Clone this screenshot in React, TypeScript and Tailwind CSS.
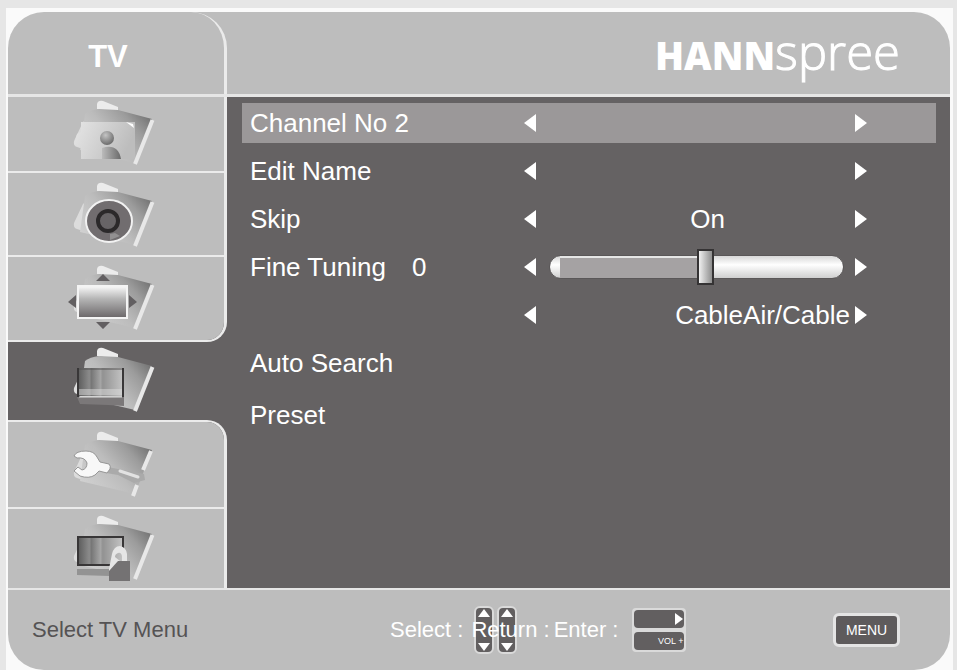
import { useState } from "react";
import type { ReactNode } from "react";

function Folder({ children, broken = false }: { children: ReactNode; broken?: boolean }) {
  return (
    <svg viewBox="0 0 92 68" className="h-[68px] w-[92px]" aria-hidden="true">
      <defs>
        <linearGradient id="folder" x1="0" y1="0.8" x2="1" y2="0.15">
          <stop offset="0" stopColor="#d2d2d2" />
          <stop offset="0.45" stopColor="#bcbcbc" />
          <stop offset="0.75" stopColor="#9c9c9c" />
          <stop offset="1" stopColor="#707070" />
        </linearGradient>
        <linearGradient id="photo" x1="0" y1="0" x2="1" y2="0.3">
          <stop offset="0" stopColor="#e6e6e6" />
          <stop offset="0.5" stopColor="#d2d2d2" />
          <stop offset="1" stopColor="#bdbdbd" />
        </linearGradient>
        <radialGradient id="ball" cx="0.4" cy="0.3" r="0.7">
          <stop offset="0" stopColor="#c4c4c4" />
          <stop offset="1" stopColor="#6c6c6c" />
        </radialGradient>
        <linearGradient id="body" x1="0" y1="0" x2="1" y2="0">
          <stop offset="0" stopColor="#bbbbbb" />
          <stop offset="1" stopColor="#6a6a6a" />
        </linearGradient>
        <linearGradient id="screen" x1="0" y1="0" x2="0" y2="1">
          <stop offset="0" stopColor="#fafafa" />
          <stop offset="0.4" stopColor="#b5b5b5" />
          <stop offset="1" stopColor="#6a6668" />
        </linearGradient>
        <linearGradient id="bars" x1="0" y1="0" x2="1" y2="0">
          <stop offset="0" stopColor="#5b5b5b" />
          <stop offset="0.25" stopColor="#8b8b8b" />
          <stop offset="0.3" stopColor="#777777" />
          <stop offset="0.5" stopColor="#a5a5a5" />
          <stop offset="0.55" stopColor="#929292" />
          <stop offset="1" stopColor="#c4c4c4" />
        </linearGradient>
      </defs>
      <path d="M29 4Q30 0 35 1L50 7V12L29 9Z" fill="#ececec" />
      <path d="M15 22L6 41Q5 46 9 47L18 50L20 18Z" fill="#dcdcdc" />
      <path d="M17 14Q22 10 31 9L50 10L84 19L67 63L12 50Z" fill="url(#folder)" />
      {broken ? (
        <path d="M83 20L75 39M69 54L65 65" stroke="#e8e8e8" strokeWidth="4" />
      ) : (
        <path d="M84.500 20L67 64" stroke="#e8e8e8" strokeWidth="4" />
      )}
      {children}
    </svg>
  );
}

function PictureIcon() {
  return (
    <Folder>
      <path d="M13 22H67V59H13V48L6 44L9 34L13 32Z" fill="url(#photo)" />
      <path d="M58 22L65 24L66 28Z" fill="#ffffff" />
      <path d="M34 59V48Q50 43 53 59Z" fill="url(#body)" />
      <circle cx="39" cy="38" r="7" fill="url(#ball)" />
    </Folder>
  );
}

function SoundIcon() {
  return (
    <Folder>
      <ellipse cx="41" cy="39" rx="23" ry="21" fill="#716d6f" stroke="#f2f2f2" strokeWidth="2" />
      <circle cx="40" cy="39" r="10" fill="#676466" stroke="#2b292a" strokeWidth="4" />
      <path d="M42 52L47 51L52 54L42 58Z" fill="#929091" />
    </Folder>
  );
}

function WindowIcon() {
  return (
    <Folder>
      <path d="M35 9L42 16H28ZM0 37L8 30V43ZM69 37L61 30V43ZM35 64L42 57H28Z" fill="#625f61" />
      <rect x="10" y="21" width="49" height="32" fill="url(#screen)" stroke="#f4f4f4" strokeWidth="2" />
    </Folder>
  );
}

function TvIcon() {
  return (
    <Folder>
      <path d="M9 50H56V59L40 58L12 57Z" fill="#7b7879" />
      <rect x="10" y="21" width="45" height="28" fill="url(#bars)" />
      <path d="M11 42H54V48H11Z" fill="#dcdcdc" opacity="0.5" />
      <path d="M9 22H56" stroke="#555253" />
      <path d="M10 21V50M55 21V50" stroke="#393738" strokeWidth="2" />
      <path d="M11 50H54" stroke="#dddddd" />
    </Folder>
  );
}

function SetupIcon() {
  return (
    <Folder broken>
      <path d="M40 36L55 39L76 43L77 49L66 52L50 44L38 42Z" fill="#aaaaaa" />
      <path d="M52 40L70 46" stroke="#e2e2e2" strokeWidth="3" strokeLinecap="round" />
      <path
        d="M6 25Q8 20 18 20Q26 20 29 26L32 31L41 33Q43 35 42 38L39 42L31 40L27 44Q21 48 12 45L6 40L10 36L14 39Q19 38 19 32Q17 26 9 27Z"
        fill="#f8f8f8"
        stroke="#969696"
        strokeWidth="1"
      />
    </Folder>
  );
}

function LockIcon() {
  return (
    <Folder>
      <path d="M9 54H42V61L9 60Z" fill="#939393" />
      <rect x="10" y="22" width="45" height="28" fill="url(#bars)" stroke="#383637" strokeWidth="2" />
      <path d="M41 54L44 39Q46 31 52 31Q58 32 59 39V47H54V41Q53 37 50 38Q47 39 47 42L52 46L41 58Z" fill="#e6e6e6" />
      <path d="M41 56L50 46H62V66H41Z" fill="#747273" />
    </Folder>
  );
}

function Arrow({ left = false, label }: { left?: boolean; label: string }) {
  return (
    <button type="button" aria-label={label} className="h-5 w-[13px] shrink-0">
      <svg viewBox="0 0 13 20" className="h-5 w-[13px]" aria-hidden="true">
        <path d={left ? "M0 10L12 1V19Z" : "M13 10L1 1V19Z"} fill="#ffffff" />
      </svg>
    </button>
  );
}

interface RowProps {
  label: string;
  value?: number;
  active?: boolean;
  children?: ReactNode;
}

function Row({ label, value, active = false, children }: RowProps) {
  return (
    <div
      role="group"
      aria-label={label || "Signal source"}
      className={`flex h-10 items-center pr-[69px] pl-2 ${active ? "bg-[#9b9899]" : ""}`}
    >
      <span className="flex w-[274px] shrink-0 gap-[26px]">
        <span>{label}</span>
        {value !== undefined && <span>{value}</span>}
      </span>
      <Arrow left label="Previous" />
      <div className="flex min-w-0 flex-1 items-center">{children}</div>
      <Arrow label="Next" />
    </div>
  );
}

const MIN = -50;
const MAX = 44;

function TuningSlider({ value, onChange }: { value: number; onChange: (v: number) => void }) {
  return (
    <div className="relative mr-[10px] ml-3 h-6 flex-1 rounded-full border border-[#5a5758] bg-linear-to-b from-[#d8d8d8] via-white via-40% to-[#cfcfcf]">
      <div
        className="absolute inset-y-0 left-[10px] border-t-2 border-[#e6e6e6] bg-[#a5a2a3]"
        style={{ width: `${((value - MIN) / (MAX - MIN)) * 100 - 6}%` }}
      />
      <input
        type="range"
        aria-label="Fine Tuning"
        min={MIN}
        max={MAX}
        value={value}
        onChange={(e) => onChange(Number(e.target.value))}
        className="absolute inset-x-0 -top-[7px] h-9 w-full appearance-none bg-transparent [&::-webkit-slider-thumb]:h-9 [&::-webkit-slider-thumb]:w-[17px] [&::-webkit-slider-thumb]:appearance-none [&::-webkit-slider-thumb]:border-2 [&::-webkit-slider-thumb]:border-[#353334] [&::-webkit-slider-thumb]:bg-linear-to-r [&::-webkit-slider-thumb]:from-[#f0f0f0] [&::-webkit-slider-thumb]:to-[#8f8f8f]"
      />
    </div>
  );
}

function Rocker() {
  return (
    <svg viewBox="0 0 20 50" className="h-[50px] w-5" aria-hidden="true">
      <rect x="1" y="2" width="18" height="46" rx="5" fill="#625f60" stroke="#dadada" strokeWidth="2" />
      <path d="M10 4L16 12H4ZM10 46L16 38H4Z" fill="#ffffff" />
    </svg>
  );
}

const tab = "flex w-full items-center justify-center bg-[#bdbdbd] pr-1 border-[#ebebeb]";

export default function App() {
  const [tuning, setTuning] = useState(0);
  return (
    <div className="min-h-screen bg-[#e6e6e6] pt-2 pr-1 pl-[6px] font-['Liberation_Sans',Arial,sans-serif]">
      <div className="bg-[#fafafa] pt-1 pr-[3px] pl-[2px]">
        <div className="overflow-hidden rounded-[36px] bg-[#bdbdbd]">
          <header className="flex h-[85px] border-b-[3px] border-[#e6e6e6]">
            <h1 className="flex w-[219px] shrink-0 items-center justify-center rounded-tr-[36px] border-r-[3px] border-[#ebebeb] pt-2 pr-4 text-[31px] leading-10 font-bold text-white">
              TV
            </h1>
            <div className="flex flex-1 items-baseline justify-end pr-[50px] font-['Open_Sans','Noto_Sans',sans-serif] leading-[78px] text-white">
              <span className="text-[38px] font-extrabold">HANN</span>
              <span className="text-[49px] font-light [-webkit-text-stroke:1px_white]">spree</span>
            </div>
          </header>

          <div className="flex bg-[#656263]">
            <nav aria-label="Menus" className="w-[219px] shrink-0">
              <div className="overflow-hidden rounded-br-[20px] border-r-[3px] border-b-2 border-[#ebebeb]">
                <button type="button" aria-label="Picture" className={`${tab} h-[76px] border-b-2`}>
                  <PictureIcon />
                </button>
                <button type="button" aria-label="Sound" className={`${tab} h-[84px] border-b-2 pt-1`}>
                  <SoundIcon />
                </button>
                <button type="button" aria-label="Window" className={`${tab} h-[83px]`}>
                  <WindowIcon />
                </button>
              </div>
              <button type="button" aria-label="TV" className="flex h-[78px] w-full items-center justify-center pr-2">
                <TvIcon />
              </button>
              <div className="overflow-hidden rounded-tr-[20px] border-t-2 border-r-[3px] border-[#ebebeb]">
                <button type="button" aria-label="Setup" className={`${tab} h-[87px] border-b-2`}>
                  <SetupIcon />
                </button>
                <button type="button" aria-label="Lock" className={`${tab} h-[79px]`}>
                  <LockIcon />
                </button>
              </div>
            </nav>

            <main className="flex flex-1 flex-col gap-2 pt-[6px] pr-[14px] pl-[15px] text-[26px] leading-10 text-white">
              <Row label="Channel No 2" active />
              <Row label="Edit Name" />
              <Row label="Skip">
                <span className="w-full pl-6 text-center">On</span>
              </Row>
              <Row label="Fine Tuning" value={tuning}>
                <TuningSlider value={tuning} onChange={setTuning} />
              </Row>
              <Row label="">
                <span className="w-full pr-1 text-right">CableAir/Cable</span>
              </Row>
              <button type="button" className="flex h-10 items-center pl-2">
                Auto Search
              </button>
              <button type="button" className="flex h-12 items-center pl-2">
                Preset
              </button>
            </main>
          </div>

          <footer className="flex h-[82px] items-center border-t-2 border-[#e6e6e6] pr-[50px] pl-6 text-[22px] leading-8 text-white">
            <span className="w-[358px] shrink-0 text-[#555354]">Select TV Menu</span>
            <span className="whitespace-nowrap">Select :</span>
            <span className="relative isolate ml-2 whitespace-nowrap">
              <span className="absolute -top-[9px] left-[3px] -z-10 flex gap-[3px]">
                <Rocker />
                <Rocker />
              </span>
              Return :
            </span>
            <span className="ml-1 whitespace-nowrap">Enter :</span>
            <span className="ml-[14px] flex flex-col rounded border-2 border-[#dadada] bg-[#dadada]">
              <span className="flex h-[18px] w-[50px] items-center justify-end rounded bg-[#625f60] pr-px">
                <svg viewBox="0 0 8 12" className="h-3 w-2" aria-hidden="true">
                  <path d="M0 0L8 6L0 12Z" fill="#ffffff" />
                </svg>
              </span>
              <span className="mt-1 flex h-[18px] w-[50px] items-center justify-end rounded bg-[#625f60] pr-px text-[9px] leading-none">
                VOL +
              </span>
            </span>
            <button
              type="button"
              className="ml-auto h-[34px] w-[67px] rounded-md border-[3px] border-[#e4e4e4] bg-[#5e5b5c] text-[14px] leading-5"
            >
              MENU
            </button>
          </footer>
        </div>
      </div>
    </div>
  );
}
